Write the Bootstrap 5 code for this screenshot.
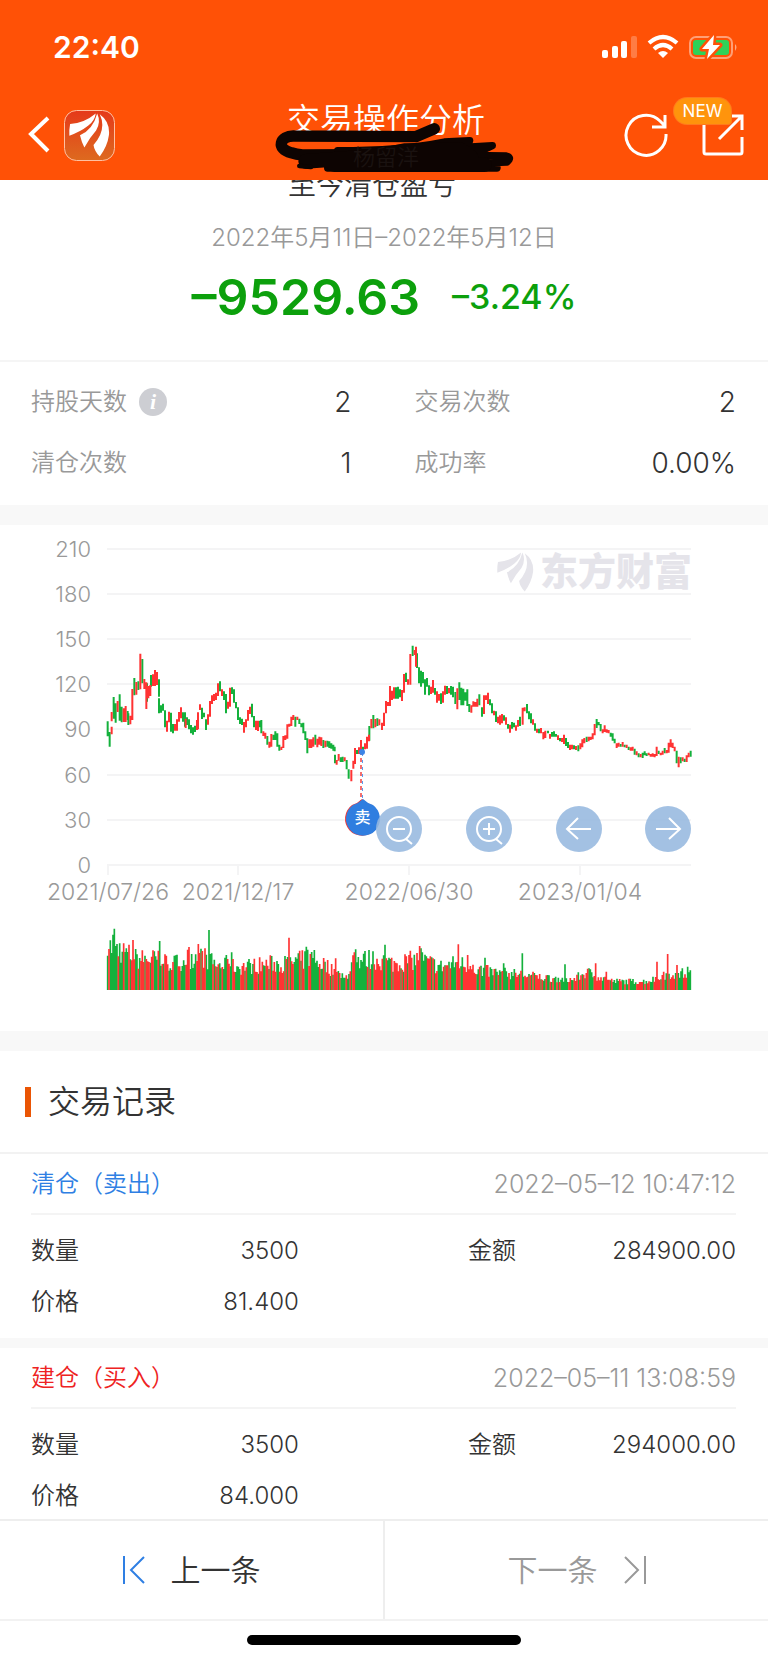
<!DOCTYPE html>
<html lang="zh-CN">
<head>
<meta charset="utf-8">
<meta name="viewport" content="width=device-width, initial-scale=1">
<title>交易操作分析</title>
<link href="https://cdn.jsdelivr.net/npm/bootstrap@5.3.0/dist/css/bootstrap.min.css" rel="stylesheet">
<style>
  body { font-family: Inter, "Noto Sans CJK SC", sans-serif; font-size: 24px; font-weight: 350; line-height: 36px; color: #333; background: #fff; }
  svg { display: block; flex: none; }
  button { font-family: inherit; font-weight: inherit; }
  .app-head { background: #ff5106; color: #fff; height: 180px; z-index: 10; }
  .status-row { height: 94px; padding: 0 30px 0 53px; }
  .clock { font-size: 30px; font-weight: 600; }
  .nav-row { height: 86px; padding: 0 24px 0 28px; }
  .nav-side { flex: 1 1 0; gap: 14px; padding-bottom: 4px; }
  .nav-side.right { gap: 34px; }
  .icon-btn { background: none; border: 0; padding: 0; color: inherit; }
  .page-title { font-size: 33px; font-weight: 350; line-height: 44px; padding-top: 4px; }
  .owner { font-size: 22px; line-height: 30px; color: #1a1210; }
  .owner span { position: relative; z-index: 2; }
  .scribble { position: absolute; top: 2px; left: 50%; margin-left: -115px; z-index: 1; }
  .new-tag { position: absolute; right: 13px; top: -16px; width: 57px; height: 26px; font-size: 17px; font-weight: 400; line-height: 26px; background: #ff940c; border-radius: 13px 13px 3px 13px; box-shadow: 0 0 0 1px #ff7a1c; text-align: center; }
  .summary { height: 197px; border-bottom: 2px solid #f5f5f5; }
  .period-name { font-size: 28px; line-height: 40px; margin: -15px 0 15px; padding-right: 24px; }
  .muted { color: #999; }
  .profit { color: #0ca00c; line-height: 68px; margin-top: 7px; gap: 32px; }
  .profit .amount { font-size: 50px; font-weight: 600; }
  .profit .rate { font-size: 34px; font-weight: 500; }
  .stats { padding: 9px 32px 12px 31px; }
  .stats > div { height: 61px; }
  .stats .start { padding-right: 32px; }
  .stats .end { padding-left: 31px; }
  .figure { font-size: 28px; }
  .info-dot { width: 28px; height: 28px; border-radius: 50%; background: #cdced3; color: #fff; font: italic 700 22px/28px "Liberation Serif", serif; margin-left: 12px; text-align: center; }
  .band { background: #f8f8f8; height: 20px; }
  .band-thin { height: 10px; }
  .chart { font-size: 22px; }
  .chart-tools { position: absolute; left: 49%; right: 10%; top: 55.5%; }
  .tool { width: 46px; height: 46px; border-radius: 50%; background: rgba(150,184,223,.88); border: 0; padding: 0; color: #fff; }
  .section-head { height: 103px; padding-left: 25px; gap: 17px; border-bottom: 2px solid #f2f2f2; }
  .section-head h2 { font-size: 32px; font-weight: 350; line-height: 48px; margin: 0; }
  .section-head i { width: 6px; height: 30px; background: #ea5504; }
  .trade { padding: 0 32px 0 31px; }
  .trade header { height: 61px; border-bottom: 2px solid #f4f4f4; }
  .trade time { font-size: 25px; }
  .trade .line { height: 51px; }
  .trade .pair { width: 38%; }
  .trade .lines { padding: 10px 0 11px; }
  .trade:last-child .lines { padding-bottom: 0; margin-bottom: -2px; }
  .sell { color: #2f7fe3; } .buy { color: #ee2222; }
  .pager { border-top: 2px solid #eee; border-bottom: 2px solid #f2f2f2; height: 102px; font-size: 30px; }
  .pager button { flex: 1 1 0; gap: 26px; background: none; border: 0; color: #333; }
  .pager button + button { border-left: 2px solid #eee; color: #999; }
  .home-bar { width: 274px; height: 10px; border-radius: 5px; background: #000; margin: 14px auto 17px; }
</style>
</head>
<body>
<svg width="0" height="0" class="position-absolute" aria-hidden="true">
  <symbol id="brand" viewBox="0 0 112 120">
    <path d="M1 62Q0 45 3 30Q42 27 73 1Q71 20 52 35Q32 51 1 62Z"/>
    <path d="M30 61Q66 44 77 1Q88 24 74 48Q57 67 42 94Q34 79 30 61Z"/>
    <path d="M84 3Q113 24 109 61Q105 91 84 119Q69 103 67 87Q104 45 84 3Z"/>
  </symbol>
</svg>

<header class="app-head sticky-top">
  <div class="status-row d-flex align-items-center justify-content-between">
    <span class="clock">22:40</span>
    <svg width="137" height="26" viewBox="0 0 137 26" fill="#fff" aria-hidden="true">
      <rect x="1" y="16" width="6" height="8" rx="2"/><rect x="11" y="12" width="6" height="12" rx="2"/><rect x="20" y="7" width="6" height="17" rx="2"/><rect x="30" y="2" width="6" height="22" rx="2" opacity=".25"/>
      <g fill="none" stroke="#fff" stroke-width="4.2"><path d="M48 9Q62 -3 76 9"/><path d="M53 15Q62 7 71 15"/></g><path d="M57 19Q62 15 67 19L62 24Z"/>
      <rect x="89" y="3" width="42" height="21" rx="6" fill="none" stroke="#fff" stroke-opacity=".45" stroke-width="2"/>
      <rect x="92" y="6" width="36" height="15" rx="3" fill="#30d158"/><path d="M134 10Q137 13 134 17Z" opacity=".5"/>
      <path d="M113 1L101 15H108L106 25L119 11H112Z" stroke="#ff5106" stroke-width="5" stroke-linejoin="round"/><path d="M113 1L101 15H108L106 25L119 11H112Z"/>
    </svg>
  </div>
  <div class="nav-row d-flex">
    <div class="nav-side d-flex align-items-center">
      <button class="icon-btn" aria-label="返回"><svg width="22" height="38" viewBox="0 0 22 38" fill="none" stroke="#fff" stroke-width="4"><path d="M20 2L3 18L20 35"/></svg></button>
      <button class="icon-btn" aria-label="东方财富"><svg width="51" height="51" viewBox="0 0 51 51"><defs><linearGradient id="tile" x2="0" y2="1"><stop stop-color="#e5391a"/><stop offset="1" stop-color="#dd6a1f"/></linearGradient></defs><rect x=".5" y=".5" width="50" height="50" rx="12" fill="url(#tile)" stroke="#ffc1a2"/><use href="#brand" x="5" y="3" width="41" height="44" fill="#fff"/></svg></button>
    </div>
    <div class="position-relative text-center">
      <h1 class="page-title mb-0">交易操作分析</h1>
      <div class="owner"><span>杨留洋</span></div>
      <svg class="scribble" width="250" height="84" viewBox="0 0 750 252" fill="none" stroke="#0d0402" stroke-linecap="round" stroke-linejoin="round" aria-hidden="true">
        <path stroke-width="34" d="M490 98L434 122Q240 121 70 120C25 118 15 160 60 170Q76 176 95 177L260 176"/>
        <path stroke-width="22" d="M200 164Q390 164 520 138L596 134L550 156L664 149L600 178L706 180Q724 184 708 198L610 202L678 216L170 216"/>
        <path stroke-width="44" d="M104 196L440 172L510 204L640 206L190 206L400 164L570 162L600 184L220 196"/>
        <path stroke-width="14" d="M85 210L120 213"/>
      </svg>
    </div>
    <div class="nav-side right d-flex align-items-center justify-content-end">
      <button class="icon-btn" aria-label="刷新"><svg width="44" height="44" viewBox="0 0 44 44" fill="none" stroke="#fff" stroke-width="3"><path d="M42 21A20 20 0 1 1 36 8L41 13M41 2V14H28"/></svg></button>
      <button class="icon-btn position-relative" aria-label="分享"><svg width="42" height="42" viewBox="0 0 42 42" fill="none" stroke="#fff" stroke-width="3"><path d="M2 9V38Q2 40 4 40H38Q40 40 40 38V23M28 2H40V16M40 2L17 25"/></svg><span class="new-tag">NEW</span></button>
    </div>
  </div>
</header>

<main>
  <section class="summary text-center">
    <div class="period-name">至今清仓盈亏</div>
    <div class="muted">2022年5月11日–2022年5月12日</div>
    <div class="profit d-flex justify-content-center"><span class="amount">–9529.63</span><span class="rate">–3.24%</span></div>
  </section>

  <section class="stats row g-0">
    <div class="col-6 start d-flex align-items-center justify-content-between"><span class="muted d-flex align-items-center">持股天数<span class="info-dot">i</span></span><span class="figure">2</span></div>
    <div class="col-6 end d-flex align-items-center justify-content-between"><span class="muted">交易次数</span><span class="figure">2</span></div>
    <div class="col-6 start d-flex align-items-center justify-content-between"><span class="muted">清仓次数</span><span class="figure">1</span></div>
    <div class="col-6 end d-flex align-items-center justify-content-between"><span class="muted">成功率</span><span class="figure">0.00%</span></div>
  </section>
  <div class="band"></div>

  <section class="chart position-relative">
    <svg class="w-100 h-auto" viewBox="0 0 768 506" role="img" aria-label="股价与成交量">
      <g id="grid" stroke="#f4f4f5" stroke-width="2"></g>
      <g fill="#e5e4ea"><use href="#brand" x="497" y="27" width="37" height="40"/><text x="540" y="60" font-size="38" font-weight="900">东方财富</text></g>
      <g id="axis" fill="#999"></g>
      <g id="bars" transform="translate(40 -5) scale(.33333)" fill="none"></g>
      <path d="M361 226V276" stroke="#f04141" stroke-width="1.5" stroke-dasharray="4 3"/><path d="M362.500 228V274" stroke="#5b9bef" stroke-width="1" stroke-dasharray="3 4"/>
      <circle cx="362" cy="227" r="3" fill="#3d84e6"/>
      <g id="pin"><path d="M362 274Q366 278 372 280A17 17 0 1 1 352 280Q358 278 362 274Z" fill="#ee3b3b"/><path d="M363 274Q367 278 373 280A17 17 0 1 1 353 280Q359 278 363 274Z" fill="#2f7ee0"/><text x="362.500" y="298" font-size="16" font-weight="500" text-anchor="middle" fill="#fff">卖</text></g>
    </svg>
    <div class="chart-tools d-flex justify-content-between">
      <button class="tool" aria-label="缩小"><svg width="46" height="46" viewBox="0 0 46 46" fill="none" stroke="#fff" stroke-width="2"><circle cx="23" cy="23" r="12"/><path d="M17 23H29M30 33L36 38"/></svg></button>
      <button class="tool" aria-label="放大"><svg width="46" height="46" viewBox="0 0 46 46" fill="none" stroke="#fff" stroke-width="2"><circle cx="23" cy="23" r="12"/><path d="M17 23H29M23 17V29M30 33L36 38"/></svg></button>
      <button class="tool" aria-label="左移"><svg width="46" height="46" viewBox="0 0 46 46" fill="none" stroke="#fff" stroke-width="2"><path d="M35 23H11M22 12L11 23L22 33"/></svg></button>
      <button class="tool" aria-label="右移"><svg width="46" height="46" viewBox="0 0 46 46" fill="none" stroke="#fff" stroke-width="2"><path d="M11 23H35M24 12L35 23L24 33"/></svg></button>
    </div>
  </section>
  <div class="band"></div>

  <section>
    <div class="section-head d-flex align-items-center"><i></i><h2>交易记录</h2></div>
    <article class="trade">
      <header class="d-flex align-items-center justify-content-between"><span class="sell">清仓（卖出）</span><time class="muted">2022–05–12 10:47:12</time></header>
      <div class="lines">
        <div class="line d-flex align-items-center justify-content-between"><div class="pair d-flex justify-content-between"><span>数量</span><span>3500</span></div><div class="pair d-flex justify-content-between"><span>金额</span><span>284900.00</span></div></div>
        <div class="line d-flex align-items-center"><div class="pair d-flex justify-content-between"><span>价格</span><span>81.400</span></div></div>
      </div>
    </article>
    <div class="band band-thin"></div>
    <article class="trade">
      <header class="d-flex align-items-center justify-content-between"><span class="buy">建仓（买入）</span><time class="muted">2022–05–11 13:08:59</time></header>
      <div class="lines">
        <div class="line d-flex align-items-center justify-content-between"><div class="pair d-flex justify-content-between"><span>数量</span><span>3500</span></div><div class="pair d-flex justify-content-between"><span>金额</span><span>294000.00</span></div></div>
        <div class="line d-flex align-items-center"><div class="pair d-flex justify-content-between"><span>价格</span><span>84.000</span></div></div>
      </div>
    </article>
  </section>
</main>

<footer>
  <div class="pager d-flex">
    <button class="d-flex align-items-center justify-content-center"><svg width="22" height="30" viewBox="0 0 22 30" fill="none" stroke="#2f7fe3" stroke-width="2"><path d="M1 1V29M21 2L8 15L21 28"/></svg>上一条</button>
    <button class="d-flex align-items-center justify-content-center">下一条<svg width="22" height="30" viewBox="0 0 22 30" fill="none" stroke="#999" stroke-width="2"><path d="M21 1V29M1 2L14 15L1 28"/></svg></button>
  </div>
  <div class="home-bar"></div>
</footer>

<script src="https://cdn.jsdelivr.net/npm/bootstrap@5.3.0/dist/js/bootstrap.bundle.min.js"></script>
<script>
  const RED = '#ff3333', GREEN = '#14b13c';
  let grid = '', axis = '';
  for (let i = 0; i < 8; i++) {
    const y = Math.round(24 + i * 45.1);
    grid += `<path d="M107 ${y}H691"/>`;
    axis += `<text x="91" y="${y + 8}" text-anchor="end">${210 - i * 30}</text>`;
  }
  [[108, '2021/07/26'], [238, '2021/12/17'], [409, '2022/06/30'], [580, '2023/01/04']].forEach(([x, label]) => {
    grid += `<path d="M${x} 340V350"/>`;
    axis += `<text x="${x}" y="375" font-size="23" text-anchor="middle">${label}</text>`;
  });
  document.getElementById('grid').innerHTML = grid;
  document.getElementById('axis').innerHTML = axis;

  // Each item: x, high, low, direction (r = up, g = down), three units to a pixel.
  const early = '203,604,649g 209,636,680g 215,576,604r 215,620,643r 221,531,596g 227,550,608g 233,543,576r 239,523,602g 245,560,607g 251,565,606r 257,558,606r 263,573,600g 265,580,615g 271,587,613r 277,507,600r 283,474,526g 289,486,524r 295,484,510g 301,401,508r 307,417,490g 313,477,507r 319,487,567r 321,490,545g 325,498,535r 331,495,528r 333,465,500g 339,463,498r 345,450,498r 351,456,495r 357,478,530g 357,535,580g 363,556,578g 369,551,572g 375,571,622g 381,602,635r 387,575,607r 393,578,635g 399,612,640g 405,612,632r 411,598,632r 417,576,605r 423,562,595r 429,577,605g 435,577,620g 437,596,624r 441,592,615g 447,598,628g 453,615,640g 459,622,644g 465,617,636g 471,600,630r 474,577,628r 480,553,570r 486,563,597g 492,578,592g 498,598,630g 504,583,614r 510,543,590r 516,526,552r 522,522,543r 528,518,540r 534,490,528r 540,484,514g 546,508,528r 552,514,540g 558,522,580g 564,545,566r 570,503,560r 576,502,522g 582,508,548g 588,546,565g 594,562,600g 600,592,612g 606,596,615g 612,606,638r 618,598,622r 624,570,602r 630,560,582r 636,551,592g 642,588,622g 648,602,630r 654,602,633r 660,602,622g 664,600,640g 670,634,648r 676,638,656r 682,648,674g 688,665,683r 694,642,680r 700,644,660g 706,634,660g 712,640,680g 718,674,692g 724,680,690r 730,648,684r 736,646,660r 742,613,656r 748,611,620r 754,590,618r 760,585,600r 766,590,620g 772,590,600r 778,596,612g 784,610,622g 790,608,640g 796,634,660g 802,655,700g 808,658,684r 814,658,684r 820,652,680r 826,644,674g 832,656,682r 838,650,674r 844,652,678r 850,660,684g 856,662,682r 862,662,680g 868,664,684g 874,670,686g 880,674,692g 884,680,694g 885,704,730g 890,720,734r 896,702,722r 902,712,726g 908,710,726g 914,712,724r 920,720,748g 926,748,776g 934,750,784r 940,722,746r 945,684,732r 951,690,702g 957,682,702r 963,660,700r 969,680,696g 975,670,688r 981,650,686r 987,644,664r';
  const late = '28,618,662g 34,597,625r 40,585,625g 46,597,622r 52,595,618g 58,598,616r 66,608,630r 72,578,618r 78,543,580r 84,546,558r 90,498,558r 96,512,540r 102,502,536r 108,502,536g 114,500,536g 120,508,532g 126,510,543r 132,462,518r 138,458,486g 144,478,494r 151,402,494r 158,377,408g 164,390,405r 168,380,440r 171,400,444g 177,442,490g 183,452,500g 189,456,490g 195,478,524g 201,474,500g 207,496,526g 213,500,522r 219,480,518r 225,504,524g 231,514,548r 237,522,542r 243,520,552g 249,514,548r 255,497,524r 261,498,522g 267,504,520r 273,498,524g 279,500,532g 286,516,552g 292,505,568r 298,487,540g 304,503,556g 310,506,556g 316,517,542g 322,508,558g 328,552,576g 334,556,578r 340,544,560r 346,546,560r 352,536,560r 358,523,556g 366,562,590g 372,526,582r 378,526,540r 384,518,552r 390,538,556g 396,550,580g 402,572,586r 408,574,606g 414,590,610r 420,586,614r 426,582,610r 432,586,602g 438,592,614r 444,612,626g 450,614,638r 456,606,626g 462,608,622g 468,616,632r 474,600,620r 480,590,618g 488,563,614r 494,562,574r 501,552,580g 507,574,598g 513,580,610g 519,598,614r 525,610,632g 531,626,638r 537,626,640g 543,624,640r 550,636,658r 556,632,654r 564,632,640g 570,642,656r 576,636,650g 582,634,650g 588,642,650g 594,646,660r 600,654,664g 606,654,666r 612,644,672r 618,654,678g 624,666,684g 630,674,690r 636,674,688r 642,676,688g 648,678,690r 655,676,694g 661,670,688r 667,658,682r 673,654,670r 680,650,666g 686,650,664r 692,650,660r 698,640,658r 704,612,646r 710,597,624g 716,606,616g 722,612,634g 728,628,640r 734,616,636r 740,628,638r 746,630,640r 752,638,650g 758,640,662g 764,656,670g 770,670,684r 776,668,680r 782,672,680g 788,666,680r 794,674,682g 800,674,684r 806,680,690g 812,682,692r 818,680,692r 824,686,704g 830,694,706r 836,700,712g 842,702,712r 848,698,714g 854,694,706g 860,700,708g 866,698,706r 872,702,710r 878,700,710r 884,702,712r 890,680,708r 896,692,702g 902,698,706r 908,692,704r 914,684,700g 920,690,700r 926,668,698r 932,658,682r 938,668,684r 944,680,694r 950,692,730g 956,710,742r 962,712,730g 968,712,724r 974,716,726g 980,706,726r 986,698,712r 992,692,710g';
  const path = { r: '', g: '' };
  [[early, 0], [late, 960]].forEach(([text, shift]) => text.split(' ').forEach(item => {
    const [x, high, low] = item.slice(0, -1).split(',').map(Number);
    path[item.slice(-1)] += `M${x + shift} ${high}V${low}`;
  }));

  // Volume: average level by position, day-to-day variation, and the peak days.
  const level = [[203, 172], [212, 135], [225, 140], [250, 125], [290, 100], [345, 100], [400, 85], [450, 105], [480, 115], [530, 80], [600, 75], [700, 85], [740, 85], [800, 100], [850, 85], [915, 35], [940, 95], [1000, 100], [1060, 85], [1140, 100], [1200, 75], [1260, 88], [1300, 66], [1380, 55], [1450, 50], [1500, 42], [1600, 33], [1640, 58], [1680, 38], [1720, 28], [1820, 28], [1900, 55], [1951, 52]];
  const peaks = { 219: 166, 223: 184, 279: 150, 359: 147, 447: 129, 475: 138, 507: 180, 559: 105, 575: 113, 747: 157, 799: 130, 823: 120, 887: 95, 947: 122, 1035: 136, 1139: 132, 1143: 125, 1255: 137, 1283: 105, 1335: 97, 1391: 80, 1447: 110, 1575: 77, 1667: 80, 1699: 55, 1851: 85, 1883: 108, 1911: 75, 1943: 70 };
  const vol = { r: '', g: '' };
  let seed = 7;
  const random = () => (seed = (seed * 16807) % 2147483647) / 2147483647;
  for (let x = 203, k = 0; x <= 1951; x += 4) {
    while (k < level.length - 2 && level[k + 1][0] < x) k++;
    const [x0, h0] = level[k], [x1, h1] = level[k + 1];
    const base = h0 + (h1 - h0) * (x - x0) / (x1 - x0);
    const h = peaks[x] || base * (0.6 + random() * 0.65);
    const side = x === 747 || x === 1255 || x === 1883 ? 'r' : x === 507 || x === 223 || x === 1447 ? 'g' : random() < 0.5 ? 'r' : 'g';
    vol[side] += `M${x} 1410V${Math.round(1410 - h)}`;
  }
  document.getElementById('bars').innerHTML =
    `<g stroke-width="6"><path d="${path.g}" stroke="${GREEN}"/><path d="${path.r}" stroke="${RED}"/></g>` +
    `<g stroke-width="5"><path d="${vol.g}" stroke="${GREEN}"/><path d="${vol.r}" stroke="${RED}"/></g>`;
</script>
</body>
</html>
